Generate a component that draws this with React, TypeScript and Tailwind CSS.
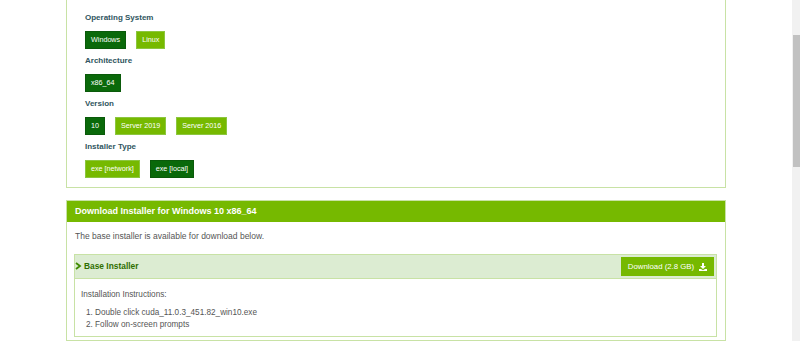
import React from "react";

const font = { fontFamily: '"Liberation Sans", Arial, sans-serif' };

function Btn({ label, dark }: { label: string; dark?: boolean }) {
  return (
    <div
      className={
        "h-[18px] px-[5px] flex items-center text-[7.2px] text-white border " +
        (dark ? "bg-[#0a690a] border-[#0a5a0a]" : "bg-[#76b900] border-[#8cc63f]")
      }
    >
      {label}
    </div>
  );
}

function Section({ label, children, last }: { label: string; children: React.ReactNode; last?: boolean }) {
  return (
    <div className={last ? "" : "mb-[6px]"}>
      <div className="h-[12px] leading-[12px] text-[8px] font-bold text-[#2f5560] mb-[7px]">{label}</div>
      <div className="flex gap-[10px]">{children}</div>
    </div>
  );
}

export default function App() {
  return (
    <div className="w-[800px] h-[341px] overflow-hidden flex bg-white" style={font}>
      <div className="w-[792px] h-full flex flex-col items-center">
        <div className="w-[660px] border-x border-b border-[#c8e2a5] pl-[18px] pt-[12px] pb-[9px]">
          <Section label="Operating System">
            <Btn label="Windows" dark />
            <Btn label="Linux" />
          </Section>
          <Section label="Architecture">
            <Btn label="x86_64" dark />
          </Section>
          <Section label="Version">
            <Btn label="10" dark />
            <Btn label="Server 2019" />
            <Btn label="Server 2016" />
          </Section>
          <Section label="Installer Type" last>
            <Btn label="exe [network]" />
            <Btn label="exe [local]" dark />
          </Section>
        </div>

        <div className="w-[660px] mt-[12px] border border-[#c8e2a5] flex-1">
          <div className="h-[21px] bg-[#76b900] flex items-center pl-[8px] text-[9px] font-bold text-white">
            Download Installer for Windows 10 x86_64
          </div>
          <div className="px-[7px] pt-[8px]">
            <div className="h-[12px] leading-[12px] text-[8.5px] text-[#555] pl-[1px]">
              The base installer is available for download below.
            </div>
            <div className="mt-[12px] border border-[#c8e2a5] h-[83px] mr-[1px]">
              <div className="h-[24px] bg-[#dcecd2] border-b border-[#c8e2a5] flex items-center justify-between pr-[2px]">
                <div className="flex items-center gap-[2px]">
                  <svg width="7" height="8" viewBox="0 0 7 8">
                    <path d="M1 1 L5 4 L1 7" fill="none" stroke="#3f8a00" strokeWidth="1.8" />
                  </svg>
                  <span className="text-[8.4px] font-bold text-[#2f6e00]">Base Installer</span>
                </div>
                <div className="h-[19px] w-[93px] bg-[#76b900] flex items-center justify-center gap-[5px] text-[7.8px] text-white">
                  <span>Download (2.8 GB)</span>
                  <svg width="8" height="8" viewBox="0 0 8 8">
                    <path d="M3 0 H5 V3 H7 L4 6 L1 3 H3 Z" fill="white" />
                    <path d="M0 6 H2 L4 7.2 L6 6 H8 V8 H0 Z" fill="white" />
                  </svg>
                </div>
              </div>
              <div className="pl-[6px] pt-[10px] text-[8.2px] text-[#555]">
                <div className="h-[12px] leading-[12px]">Installation Instructions:</div>
                <div className="mt-[6px] pl-[5px] leading-[12px]">
                  <div>1. Double click cuda_11.0.3_451.82_win10.exe</div>
                  <div>2. Follow on-screen prompts</div>
                </div>
              </div>
            </div>
          </div>
        </div>
      </div>
      <div className="w-[8px] h-full bg-[#f1f1f1] relative">
        <div className="absolute left-[1px] right-0 top-[35px] h-[132px] bg-[#c1c1c1]" />
      </div>
    </div>
  );
}
